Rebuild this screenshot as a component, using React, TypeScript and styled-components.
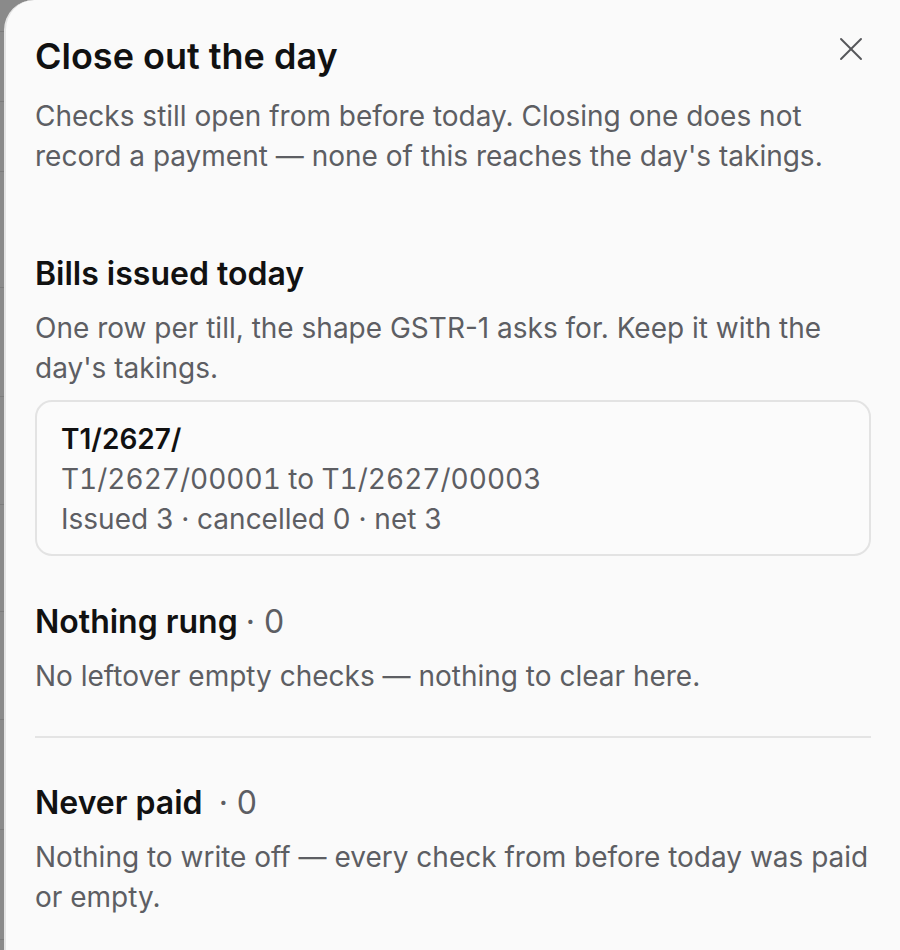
import React from "react";
import styled, { createGlobalStyle } from "styled-components";

const Global = createGlobalStyle`
  html, body { margin: 0; padding: 0; }
  body { font-family: Inter, "Noto Sans", sans-serif; background: #8a8a8a; }
  * { box-sizing: border-box; }
`;

const Page = styled.div`
  display: flex;
  min-height: 950px;
  background: #8a8a8a;
`;

const Backdrop = styled.div`
  width: 4px;
  display: flex;
  flex-direction: column;
`;

const BackRow = styled.div<{ $h: number }>`
  height: ${(p) => p.$h}px;
  border-bottom: 1px solid #7c7c7c;
`;

const Sheet = styled.section`
  position: relative;
  flex: 1;
  background: #fafafa;
  border-left: 2px solid #e4e4e4;
  border-top-left-radius: 30px;
  padding: 36px 29px 36px 29px;
  display: flex;
  flex-direction: column;
`;

const Header = styled.header`
  display: flex;
  flex-direction: column;
  gap: 20px;
  margin-bottom: 80px;
`;

const Title = styled.h2`
  margin: 0;
  font-size: 36px;
  line-height: 40px;
  font-weight: 600;
  color: #111111;
`;

const Text = styled.p`
  margin: 0;
  font-size: 28px;
  line-height: 40px;
  font-weight: 400;
  color: #5d5e63;
`;

const CloseButton = styled.button`
  position: absolute;
  top: 36px;
  right: 36px;
  width: 26px;
  height: 26px;
  padding: 0;
  border: none;
  background: transparent;
  color: #55565a;
  display: flex;
  align-items: center;
  justify-content: center;
  cursor: pointer;
`;

const Section = styled.div`
  display: flex;
  flex-direction: column;
  gap: 16px;
`;

const Heading = styled.h3`
  margin: 0;
  font-size: 32px;
  line-height: 36px;
  font-weight: 600;
  color: #111111;
`;

const Count = styled.span`
  font-weight: 400;
  color: #5d5e63;
`;

const Card = styled.div`
  margin-top: -4px;
  border: 2px solid #e3e3e3;
  border-radius: 17px;
  background: #fbfbfb;
  padding: 17px 24px 15px;
  display: flex;
  flex-direction: column;
`;

const CardTitle = styled.div`
  font-size: 28px;
  line-height: 40px;
  font-weight: 600;
  color: #111111;
`;

const CardLine = styled.div<{ $numeric?: boolean }>`
  font-size: 28px;
  line-height: 40px;
  color: #5d5e63;
  font-variant-numeric: ${(p) => (p.$numeric ? "tabular-nums" : "normal")};
`;

const Divider = styled.hr`
  margin: 40px 0 47px;
  border: none;
  border-top: 2px solid #e4e4e4;
  height: 0;
`;

const Spacer = styled.div<{ $h: number }>`
  height: ${(p) => p.$h}px;
`;

export default function App() {
  const rows = [32, 70, 70, 116, 109, 108, 107, 108, 110, 110];
  return (
    <>
      <Global />
      <Page>
        <Backdrop>
          {rows.map((h, i) => (
            <BackRow key={i} $h={h} />
          ))}
        </Backdrop>
        <Sheet>
          <CloseButton aria-label="Close">
            <svg width="24" height="24" viewBox="0 0 24 24" fill="none" stroke="currentColor" strokeWidth="1.9" strokeLinecap="round">
              <path d="M2 2 22 22" />
              <path d="M22 2 2 22" />
            </svg>
          </CloseButton>
          <Header>
            <Title>Close out the day</Title>
            <Text>
              Checks still open from before today. Closing one does not record a payment — none of this reaches the day's takings.
            </Text>
          </Header>

          <Section>
            <Heading>Bills issued today</Heading>
            <Text>One row per till, the shape GSTR-1 asks for. Keep it with the day's takings.</Text>
            <Card>
              <CardTitle>T1/2627/</CardTitle>
              <CardLine $numeric>T1/2627/00001 to T1/2627/00003</CardLine>
              <CardLine>Issued 3 · cancelled 0 · net 3</CardLine>
            </Card>
          </Section>

          <Spacer $h={48} />

          <Section>
            <Heading>
              Nothing rung <Count>· 0</Count>
            </Heading>
            <Text>No leftover empty checks — nothing to clear here.</Text>
          </Section>

          <Divider />

          <Section>
            <Heading>
              Never paid&nbsp; <Count>· 0</Count>
            </Heading>
            <Text>Nothing to write off — every check from before today was paid or empty.</Text>
          </Section>
        </Sheet>
      </Page>
    </>
  );
}
